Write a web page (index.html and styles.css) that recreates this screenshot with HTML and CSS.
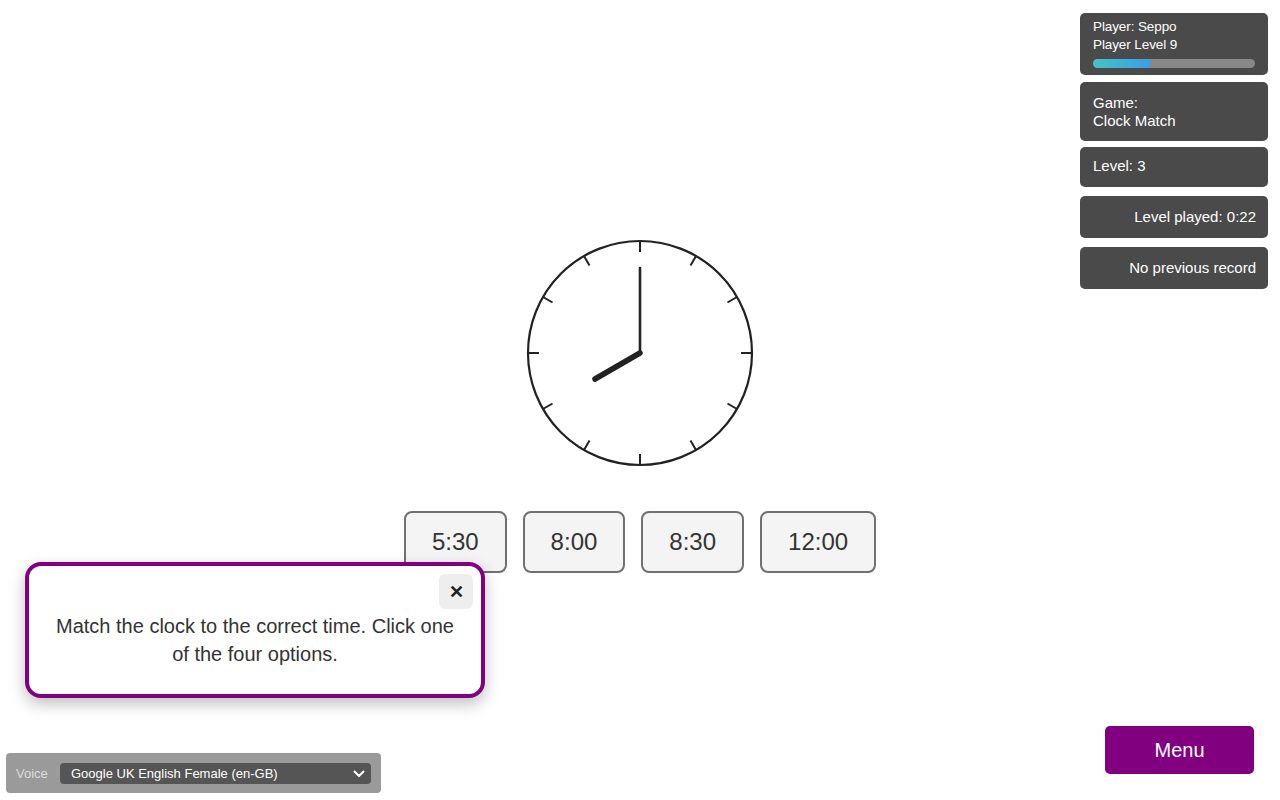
FILE: index.html
```html
<!DOCTYPE html>
<html lang="en">
<head>
    <meta charset="UTF-8">
    <meta name="viewport" content="width=device-width, initial-scale=1.0">
    <title>Clock Match</title>
    <link rel="stylesheet" href="styles.css">
</head>
<body>
    <div class="app">
        <div class="top">
            <div class="spacer"></div>

            <main class="stage">
                <svg class="clock" width="230" height="230" viewBox="0 0 230 230">
                    <circle cx="115" cy="115" r="112" fill="#fff" stroke="#222" stroke-width="2.2"/>
                    <g stroke="#222" stroke-width="2">
                        <line x1="115" y1="3" x2="115" y2="14"/>
                        <line x1="115" y1="3" x2="115" y2="14" transform="rotate(30 115 115)"/>
                        <line x1="115" y1="3" x2="115" y2="14" transform="rotate(60 115 115)"/>
                        <line x1="115" y1="3" x2="115" y2="14" transform="rotate(90 115 115)"/>
                        <line x1="115" y1="3" x2="115" y2="14" transform="rotate(120 115 115)"/>
                        <line x1="115" y1="3" x2="115" y2="14" transform="rotate(150 115 115)"/>
                        <line x1="115" y1="3" x2="115" y2="14" transform="rotate(180 115 115)"/>
                        <line x1="115" y1="3" x2="115" y2="14" transform="rotate(210 115 115)"/>
                        <line x1="115" y1="3" x2="115" y2="14" transform="rotate(240 115 115)"/>
                        <line x1="115" y1="3" x2="115" y2="14" transform="rotate(270 115 115)"/>
                        <line x1="115" y1="3" x2="115" y2="14" transform="rotate(300 115 115)"/>
                        <line x1="115" y1="3" x2="115" y2="14" transform="rotate(330 115 115)"/>
                    </g>
                    <!-- minute hand -->
                    <line x1="115" y1="115" x2="115" y2="30" stroke="#222" stroke-width="2.6" stroke-linecap="round"/>
                    <!-- hour hand -->
                    <line x1="115" y1="115" x2="70" y2="141" stroke="#222" stroke-width="5.5" stroke-linecap="round"/>
                </svg>

                <div class="options">
                    <button class="option">5:30</button>
                    <button class="option">8:00</button>
                    <button class="option">8:30</button>
                    <button class="option">12:00</button>
                </div>
            </main>

            <aside class="hud">
                <div class="panel panel-player">
                    <div>Player: Seppo</div>
                    <div>Player Level 9</div>
                    <div class="xp-bar"><div class="xp-fill" style="width: 36%"></div></div>
                </div>
                <div class="panel panel-game">
                    <div>Game:</div>
                    <div>Clock Match</div>
                </div>
                <div class="panel panel-level">Level: 3</div>
                <div class="panel panel-right">Level played: 0:22</div>
                <div class="panel panel-right">No previous record</div>
            </aside>
        </div>

        <footer class="bottom">
            <div class="voice">
                <label for="voice-select">Voice</label>
                <div class="select-wrap">
                    <select id="voice-select">
                        <option>Google UK English Female (en-GB)</option>
                    </select>
                    <svg class="chevron" width="12" height="8" viewBox="0 0 12 8">
                        <path d="M1.5 1.5 L6 6 L10.5 1.5" fill="none" stroke="#fff" stroke-width="2" stroke-linecap="round" stroke-linejoin="round"/>
                    </svg>
                </div>
            </div>
            <button class="menu-btn">Menu</button>
        </footer>

        <div class="hint">
            <div class="hint-head">
                <button class="hint-close">&#x2715;</button>
            </div>
            <p class="hint-text">Match the clock to the correct time. Click one of the four options.</p>
        </div>
    </div>
</body>
</html>
```

FILE: styles.css
```css
body {
    margin: 0;
    font-family: "Liberation Sans", Arial, sans-serif;
    color: #333;
    background: #fff;
}
.app {
    position: relative;
    height: 100vh;
    display: flex;
    flex-direction: column;
}
.top {
    flex: 1;
    display: grid;
    grid-template-columns: 1fr auto 1fr;
}
.stage {
    padding-top: 238px;
}
.clock {
    display: block;
    margin: 0 auto;
}
.options {
    display: flex;
    gap: 16px;
    margin-top: 43px;
}
.option {
    height: 62px;
    padding: 0 26px;
    border: 2px solid #707070;
    border-radius: 8px;
    background-color: #f4f4f4;
    color: #333;
    font-family: inherit;
    font-size: 24px;
    cursor: pointer;
}
.option:hover {
    background-color: #e8e8e8;
}
.hud {
    justify-self: end;
    width: 188px;
    margin: 13px 12px 0 0;
}
.panel {
    box-sizing: border-box;
    background-color: #4a4a4a;
    color: #fff;
    font-size: 15px;
    line-height: 18px;
    border-radius: 5px;
    padding: 10px 13px;
    margin-bottom: 9px;
}
.panel-player {
    font-size: 13.5px;
    letter-spacing: -0.1px;
    padding: 5px 13px 7px;
    margin-bottom: 7px;
}
.panel-game {
    padding: 12px 13px 11px;
    margin-bottom: 6px;
}
.panel-level {
    padding: 10px 13px 12px;
}
.panel-right {
    text-align: right;
    padding: 12px 12px;
}
.xp-bar {
    height: 9px;
    margin-top: 5px;
    background-color: #888;
    border-radius: 5px;
    overflow: hidden;
}
.xp-fill {
    height: 100%;
    background: linear-gradient(90deg, #45c2c6, #3a9ee8);
    border-radius: 5px;
}
.bottom {
    display: flex;
    justify-content: space-between;
    align-items: flex-end;
}
.voice {
    display: flex;
    align-items: center;
    width: 375px;
    height: 40px;
    box-sizing: border-box;
    margin: 0 0 7px 6px;
    padding: 0 10px;
    background-color: #9a9a9a;
    border-radius: 4px;
}
.voice label {
    color: #ddd;
    font-size: 13px;
    width: 44px;
}
.select-wrap {
    position: relative;
    flex: 1;
}
.select-wrap select {
    display: block;
    width: 100%;
    height: 21px;
    padding: 0 24px 0 11px;
    border: none;
    border-radius: 4px;
    background-color: #555;
    color: #fff;
    font-family: inherit;
    font-size: 13px;
    appearance: none;
    -webkit-appearance: none;
}
.chevron {
    position: absolute;
    right: 6px;
    top: 7px;
    pointer-events: none;
}
.menu-btn {
    width: 149px;
    height: 48px;
    margin: 0 26px 26px 0;
    border: none;
    border-radius: 5px;
    background-color: #800080;
    color: #fff;
    font-family: inherit;
    font-size: 20px;
    cursor: pointer;
}
.hint {
    position: absolute;
    left: 25px;
    top: 562px;
    width: 460px;
    box-sizing: border-box;
    padding: 8px 8px 26px;
    background-color: #fff;
    border: 4px solid #800080;
    border-radius: 16px;
    box-shadow: 0 6px 16px rgba(0, 0, 0, 0.25);
}
.hint-head {
    display: flex;
    justify-content: flex-end;
}
.hint-close {
    width: 34px;
    height: 35px;
    border: none;
    border-radius: 6px;
    background-color: #eee;
    color: #222;
    font-size: 18px;
    font-weight: bold;
    cursor: pointer;
}
.hint-text {
    margin: 3px 0 0;
    padding: 0 12px;
    text-align: center;
    font-size: 20px;
    line-height: 28px;
    color: #333;
}
```
